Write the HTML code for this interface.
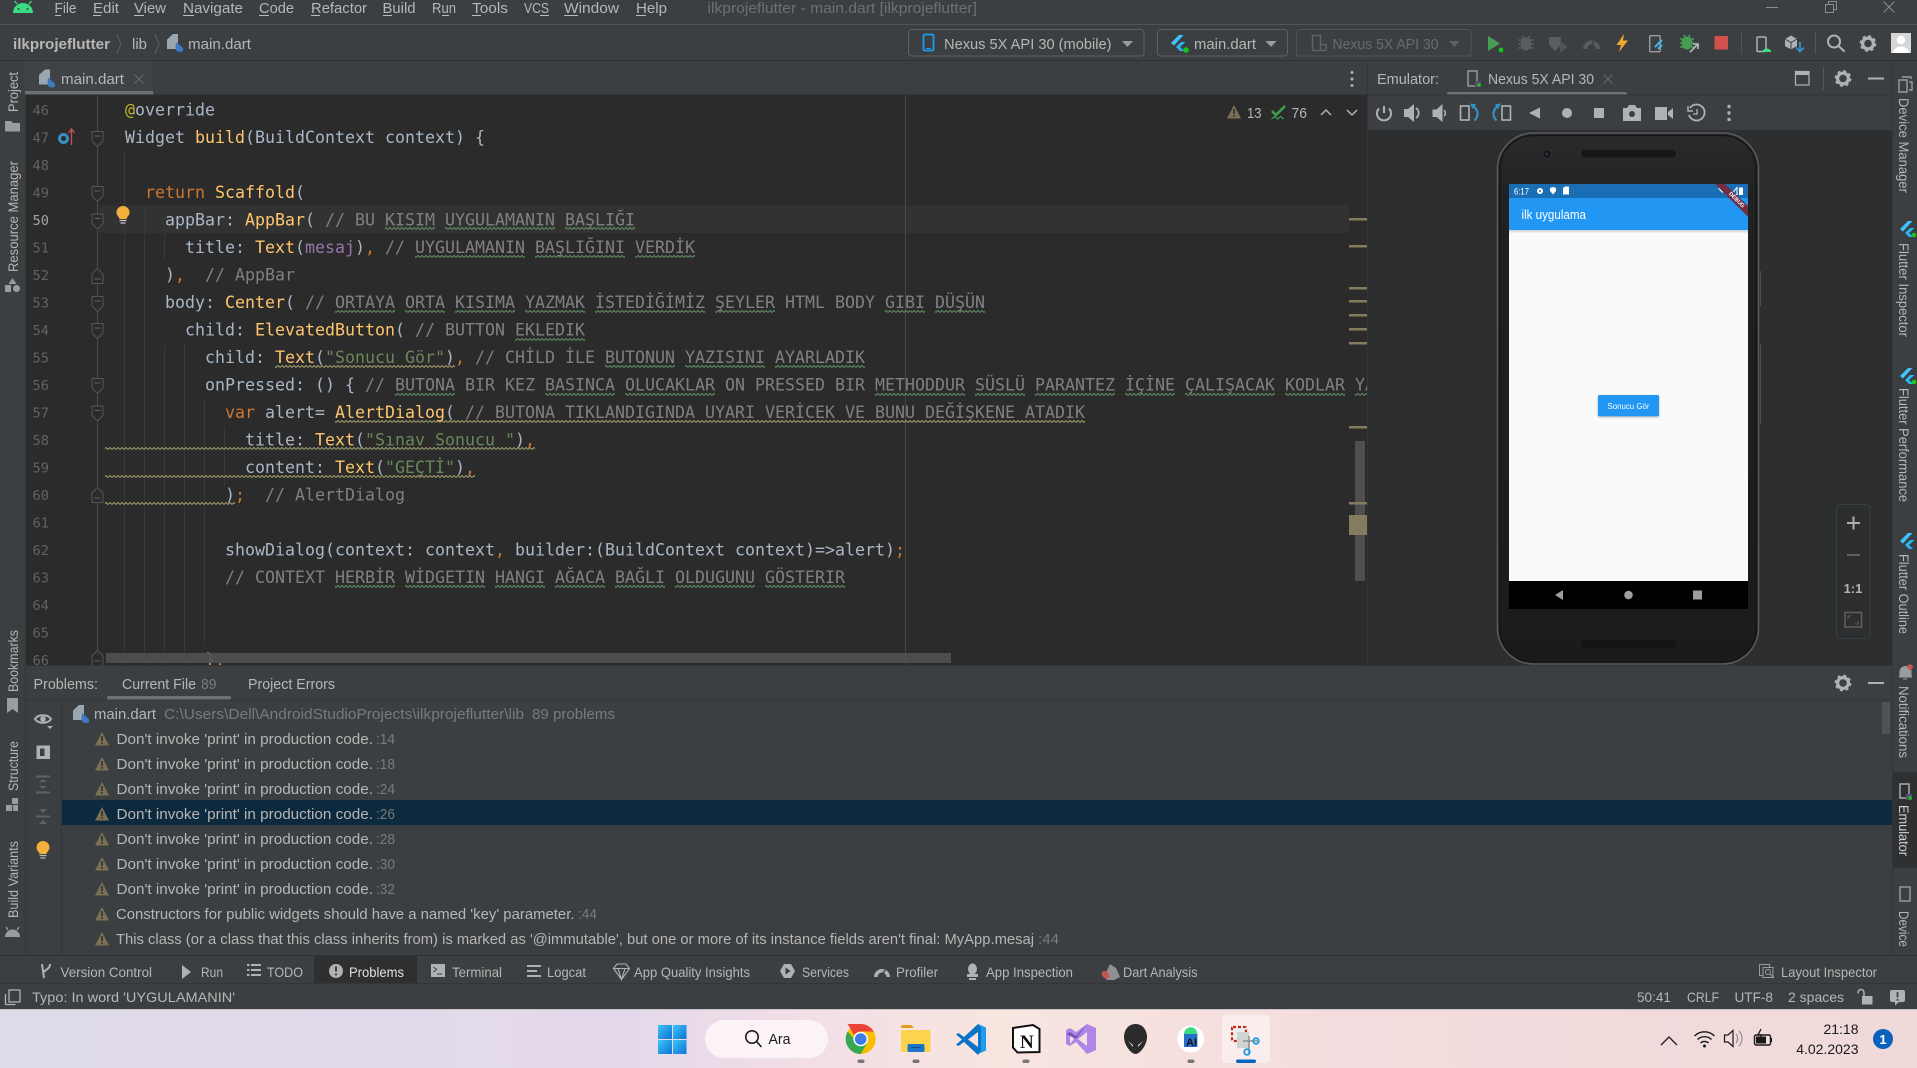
<!DOCTYPE html>
<html lang="en"><head><meta charset="utf-8"><title>ilkprojeflutter - main.dart</title>
<style>
html,body{margin:0;padding:0;background:#3c3f41;width:1917px;height:1068px;overflow:hidden}
svg{display:block}
text{white-space:pre}
.t{font-family:"Liberation Sans",sans-serif;font-size:15px;fill:#b6b6b6}
.s{font-size:14px}
.d{fill:#787a7c}
.v{font-family:"Liberation Sans",sans-serif;font-size:13.5px;fill:#b6b6b6}
.code text{font-family:"DejaVu Sans Mono","Liberation Mono",monospace;font-size:16.61px;fill:#a9b7c6}
.ln{font-family:"DejaVu Sans Mono","Liberation Mono",monospace;font-size:13.7px;fill:#606366}
.k{fill:#cc7832!important}.c{fill:#808080!important}.y{fill:#ffc66d!important}.g{fill:#6a8759!important}.p{fill:#9876aa!important}.a{fill:#bbb529!important}
.w rect{height:3px}
.i{fill:#afb1b3}
.dim{fill:#5f6163}
</style></head><body>
<svg width="1917" height="1068" viewBox="0 0 1917 1068" xmlns="http://www.w3.org/2000/svg">
<defs>
<pattern id="wg" patternUnits="userSpaceOnUse" width="4" height="3"><path d="M0 2.5L2 .5L4 2.5" fill="none" stroke="#5f8f62" stroke-width="1"/></pattern>
<pattern id="wy" patternUnits="userSpaceOnUse" width="4" height="3"><path d="M0 2.5L2 .5L4 2.5" fill="none" stroke="#a39c6b" stroke-width="1"/></pattern>
<linearGradient id="tb" x1="0" x2="1" y1="0" y2="0"><stop offset="0" stop-color="#dfdbe9"/><stop offset=".33" stop-color="#e4d9ea"/><stop offset=".43" stop-color="#f3dfe6"/><stop offset=".52" stop-color="#f8e5e0"/><stop offset=".7" stop-color="#f3dcdd"/><stop offset="1" stop-color="#f0d9d9"/></linearGradient>
<linearGradient id="ph" x1="0" x2="0" y1="0" y2="1"><stop offset="0" stop-color="#2a2b2d"/><stop offset=".12" stop-color="#202123"/><stop offset="1" stop-color="#1b1b1b"/></linearGradient>
<linearGradient id="win" x1="0" x2="1" y1="0" y2="1"><stop offset="0" stop-color="#3fc5f8"/><stop offset="1" stop-color="#0a73d3"/></linearGradient>
<g id="gear"><circle r="5.4" fill="none" stroke="currentColor" stroke-width="3.2"/><circle r="7.3" fill="none" stroke="currentColor" stroke-width="2.2" stroke-dasharray="2.9 2.83"/></g>
<g id="tri"><path d="M7 0L14 13.5H0Z" fill="#7a7054"/><path d="M6.2 4h1.6v5H6.2zM6.2 10h1.6v1.8H6.2z" fill="#2f2f2f"/></g>
<g id="dart"><path d="M6 0h5v15H0V5.5z" fill="#9aa7b0"/><path d="M9 8L16 14Q17 18 13 18Q9 18 8.500 14z" fill="#3d7ac2"/></g>
<g id="fl"><path d="M0 8L8 0H12.500L3 10.500Z" fill="#40c4ff"/><path d="M5 12L10 7H14.500L9 12L13 16H9Z" fill="#29b6f6"/></g>
<g id="fold"><path d="M-5.500 -7.500H5.500V2L0 7.500L-5.500 2Z" fill="#2b2b2b" stroke="#555" stroke-width="1"/><path d="M-3 -3H3" stroke="#606060" stroke-width="1"/></g>
<g id="unf"><path d="M-5.500 7.500H5.500V-2L0 -7.500L-5.500 -2Z" fill="#2b2b2b" stroke="#555" stroke-width="1"/><path d="M-3 3H3" stroke="#606060" stroke-width="1"/></g>
<clipPath id="ed"><rect x="99" y="95" width="1268" height="570"/></clipPath>
<clipPath id="rs"><rect x="1892" y="61" width="25" height="888"/></clipPath>
</defs>

<!-- base -->
<rect width="1917" height="1068" fill="#3c3f41"/>
<rect x="0" y="24" width="1917" height="1" fill="#515557"/>
<rect x="0" y="60" width="1917" height="1" fill="#2f3133"/>

<!-- title bar -->
<g>
<path d="M13 13a10 10 0 0 1 20 0z" fill="#3ddc84"/><path d="M17 4l-2.500-3M29 4l2.500-3" stroke="#3ddc84" stroke-width="1.300"/><circle cx="18.500" cy="9" r="1" fill="#3c3f41"/><circle cx="27.500" cy="9" r="1" fill="#3c3f41"/>
<text class="t" x="54.500" y="13" textLength="22" lengthAdjust="spacingAndGlyphs">File</text>
<text class="t" x="93" y="13" textLength="26" lengthAdjust="spacingAndGlyphs">Edit</text>
<text class="t" x="134" y="13" textLength="32" lengthAdjust="spacingAndGlyphs">View</text>
<text class="t" x="183" y="13" textLength="60" lengthAdjust="spacingAndGlyphs">Navigate</text>
<text class="t" x="259" y="13" textLength="35" lengthAdjust="spacingAndGlyphs">Code</text>
<text class="t" x="311" y="13" textLength="56" lengthAdjust="spacingAndGlyphs">Refactor</text>
<text class="t" x="382.500" y="13" textLength="33" lengthAdjust="spacingAndGlyphs">Build</text>
<text class="t" x="432" y="13" textLength="24" lengthAdjust="spacingAndGlyphs">Run</text>
<text class="t" x="472" y="13" textLength="36" lengthAdjust="spacingAndGlyphs">Tools</text>
<text class="t" x="524" y="13" textLength="25" lengthAdjust="spacingAndGlyphs">VCS</text>
<text class="t" x="564" y="13" textLength="55" lengthAdjust="spacingAndGlyphs">Window</text>
<text class="t" x="636" y="13" textLength="31" lengthAdjust="spacingAndGlyphs">Help</text>
<path d="M55 15.500h6M93 15.500h8M134 15.500h10M183 15.500h11M259 15.500h10M311 15.500h9M383 15.500h9M442 15.500h7M472 15.500h9M540 15.500h9M564 15.500h14M636 15.500h10" stroke="#bbb" stroke-width="1"/>
<text class="t d" x="707.500" y="13" textLength="269.500" lengthAdjust="spacingAndGlyphs" style="fill:#6d7072">ilkprojeflutter - main.dart [ilkprojeflutter]</text>
<path d="M1766 7.500h12" stroke="#8a8c8e"/>
<path d="M1825.500 4.500h8v8h-8zM1828.500 4.500v-3h8v8h-3" fill="none" stroke="#8a8c8e"/>
<path d="M1883.500 1.500l11 11M1894.500 1.500l-11 11" stroke="#8a8c8e"/>
</g>

<!-- breadcrumb -->
<text class="t" x="13" y="49" textLength="97" lengthAdjust="spacingAndGlyphs" font-weight="700">ilkprojeflutter</text>
<path d="M117 34l4 10-4 10M155 34l4 10-4 10" fill="none" stroke="#5e6163"/>
<text class="t" x="132" y="49" textLength="15" lengthAdjust="spacingAndGlyphs">lib</text>
<use href="#dart" x="167" y="34"/>
<text class="t" x="188" y="49" textLength="63" lengthAdjust="spacingAndGlyphs">main.dart</text>

<!-- run config selectors -->
<rect x="908.500" y="29.500" width="235.500" height="26.500" rx="3" fill="#3c3f41" stroke="#5e6163"/>
<rect x="923.500" y="34.500" width="10" height="16" rx="1.500" fill="none" stroke="#1e9df0" stroke-width="1.800"/><path d="M926 48.500h5" stroke="#1e9df0"/>
<text class="t" x="944" y="49" textLength="167.500" lengthAdjust="spacingAndGlyphs">Nexus 5X API 30 (mobile)</text>
<path d="M1122 41h11l-5.500 6z" fill="#9a9da0"/>
<rect x="1157.500" y="29.500" width="130" height="26.500" rx="3" fill="#3c3f41" stroke="#5e6163"/>
<use href="#fl" x="1171" y="35"/><circle cx="1186" cy="50" r="2.800" fill="#14c914"/>
<text class="t" x="1194" y="49" textLength="62" lengthAdjust="spacingAndGlyphs">main.dart</text>
<path d="M1265.500 41h11l-5.500 6z" fill="#9a9da0"/>
<rect x="1296.500" y="29.500" width="174.500" height="26.500" rx="3" fill="#3c3f41" stroke="#505355"/>
<path d="M1312.500 35.500h8v15h-8zM1320 44.500h6v6h-5" fill="none" stroke="#5f6163" stroke-width="1.500"/>
<text class="t" x="1332.500" y="49" textLength="106" lengthAdjust="spacingAndGlyphs" style="fill:#696c6e">Nexus 5X API 30</text>
<path d="M1449 41h10.500l-5.250 6z" fill="#5f6163"/>

<!-- top toolbar icons -->
<path d="M1488 36l12 7.500-12 7.500z" fill="#499c54"/><circle cx="1501" cy="50" r="2.400" fill="#14c914"/>
<g fill="#5a5d5f"><ellipse cx="1526" cy="44" rx="5.500" ry="6.500"/><path d="M1518 40h16M1518 44h16M1518 48h16M1522 36l2 3M1530 36l-2 3" stroke="#5a5d5f" stroke-width="1.600"/></g>
<path d="M1549 37h12v8l-6 6-6-6z" fill="#5a5d5f"/><path d="M1560 41l8 6-8 6z" fill="#505355"/>
<path d="M1583 49a8.500 8.500 0 0 1 17 0h-4a4.500 4.500 0 0 0-9 0z" fill="#5a5d5f"/><path d="M1590 49l4-8" stroke="#3c3f41" stroke-width="1.500"/>
<path d="M1624 34l-7.500 11h4.500l-2 7 9-11.500h-5z" fill="#f0a732"/>
<rect x="1649.700" y="35.700" width="10.500" height="16" rx="1" fill="none" stroke="#9a9da0" stroke-width="1.400"/><path d="M1655 47l7-7M1658 49l4-4" stroke="#3fb7ee" stroke-width="2"/>
<g fill="#499c54"><ellipse cx="1687" cy="43" rx="5.500" ry="6.500"/><path d="M1680 39h14M1680 43h14M1680 47h14M1684 35l1.500 3M1690 35l-1.500 3" stroke="#499c54" stroke-width="1.600"/></g><path d="M1690 52l8-8m-5 0h5v5" fill="none" stroke="#afb1b3" stroke-width="1.800"/>
<rect x="1714.500" y="36" width="13.500" height="13.500" fill="#d2504d"/>
<path d="M1741.500 32v22M1815.500 32v22" stroke="#515557"/>
<rect x="1757" y="37" width="9" height="14.500" rx="1" fill="none" stroke="#afb1b3" stroke-width="1.500"/><path d="M1762 52a5 5 0 0 1 9.500 0z" fill="#3ddc84"/>
<path d="M1785 39l6-3.500 6 3.500v7l-6 3.500-6-3.500z" fill="#afb1b3"/><path d="M1785 39l6 3.500 6-3.500M1791 42.500v7" stroke="#3c3f41" fill="none"/><path d="M1800 42v9m-4-3.500l4 4 4-4" stroke="#3592c4" stroke-width="1.800" fill="none"/>
<circle cx="1834" cy="41.500" r="6" fill="none" stroke="#afb1b3" stroke-width="2"/><path d="M1838.500 46l6 5.500" stroke="#afb1b3" stroke-width="2.200"/>
<use href="#gear" x="1868" y="43.500" color="#afb1b3"/>
<rect x="1891" y="33" width="20" height="20" fill="#d6d6d6"/><circle cx="1901" cy="40" r="4.200" fill="#fff"/><path d="M1893 53a8 6.500 0 0 1 16 0z" fill="#fff"/>

<!-- tab row -->
<rect x="25" y="61" width="128" height="33" fill="#3f4345"/>
<rect x="25" y="91" width="128" height="3.500" fill="#6d7175"/>
<use href="#dart" x="39" y="69.500"/>
<text class="t" x="61" y="84" textLength="63" lengthAdjust="spacingAndGlyphs">main.dart</text>
<path d="M134.500 74.500l9 9M143.500 74.500l-9 9" stroke="#686b6d"/>
<circle cx="1352" cy="72.500" r="1.500" fill="#afb1b3"/><circle cx="1352" cy="79" r="1.500" fill="#afb1b3"/><circle cx="1352" cy="85.500" r="1.500" fill="#afb1b3"/>

<!-- editor -->
<rect x="25" y="94.500" width="1343" height="570.500" fill="#2b2b2b"/>
<rect x="99" y="205.500" width="1250" height="27.500" fill="#323232"/>
<path d="M97.500 96V660" stroke="#4a4a4a"/>
<g stroke="#383838"><path d="M124.500 150V665M144.500 205V665M164.500 233V260M164.500 345V665M184.500 343V665M204.500 400V645M224.500 427V487"/></g>
<path d="M905.500 95V665" stroke="#474747"/>

<g class="ln">
<text x="32.500" y="115">46</text><text x="32.500" y="142.500">47</text><text x="32.500" y="170">48</text><text x="32.500" y="197.500">49</text><text x="32.500" y="225" style="fill:#a4a3a3">50</text><text x="32.500" y="252.500">51</text><text x="32.500" y="280">52</text><text x="32.500" y="307.500">53</text><text x="32.500" y="335">54</text><text x="32.500" y="362.500">55</text><text x="32.500" y="390">56</text><text x="32.500" y="417.500">57</text><text x="32.500" y="445">58</text><text x="32.500" y="472.500">59</text><text x="32.500" y="500">60</text><text x="32.500" y="527.500">61</text><text x="32.500" y="555">62</text><text x="32.500" y="582.500">63</text><text x="32.500" y="610">64</text><text x="32.500" y="637.500">65</text><text x="32.500" y="665">66</text>
</g>
<use href="#fold" x="97.500" y="139"/><use href="#fold" x="97.500" y="194"/><use href="#fold" x="97.500" y="221.500"/><use href="#unf" x="97.500" y="276"/><use href="#fold" x="97.500" y="304"/><use href="#fold" x="97.500" y="331"/><use href="#fold" x="97.500" y="386"/><use href="#fold" x="97.500" y="413.500"/><use href="#unf" x="97.500" y="495"/><use href="#unf" x="97.500" y="658"/>
<circle cx="63.500" cy="138.500" r="4" fill="none" stroke="#3592c4" stroke-width="3"/><path d="M71.500 145V130m-3 3l3-4 3 4" stroke="#c75450" fill="none" stroke-width="1.300"/>
<path d="M123 206a6.500 6.500 0 0 1 6.500 6.500c0 3-2.500 4-3 6.500h-7c-.5-2.500-3-3.500-3-6.500a6.500 6.500 0 0 1 6.500-6.500z" fill="#f4af3d" transform="translate(0,0)"/><path d="M119.500 220.500h7M120.500 223h5" stroke="#c9c9c9" stroke-width="1.300"/>

<!-- wavy underlines -->
<g clip-path="url(#ed)">
<g class="w" fill="url(#wg)" transform="translate(0,227)"><rect x="385" width="50"/><rect x="445" width="110"/><rect x="565" width="70"/></g>
<g class="w" fill="url(#wg)" transform="translate(0,255)"><rect x="415" width="110"/><rect x="535" width="90"/><rect x="635" width="60"/></g>
<g class="w" fill="url(#wg)" transform="translate(0,310)"><rect x="335" width="60"/><rect x="405" width="40"/><rect x="455" width="60"/><rect x="525" width="60"/><rect x="595" width="110"/><rect x="715" width="60"/><rect x="885" width="40"/><rect x="935" width="50"/></g>
<g class="w" fill="url(#wg)" transform="translate(0,338)"><rect x="515" width="70"/></g>
<g class="w" fill="url(#wy)" transform="translate(0,365)"><rect x="275" width="180"/></g>
<g class="w" fill="url(#wg)" transform="translate(0,365)"><rect x="605" width="70"/><rect x="685" width="80"/><rect x="775" width="90"/></g>
<g class="w" fill="url(#wg)" transform="translate(0,393)"><rect x="395" width="60"/><rect x="545" width="70"/><rect x="625" width="90"/><rect x="875" width="90"/><rect x="975" width="50"/><rect x="1035" width="80"/><rect x="1125" width="50"/><rect x="1185" width="90"/><rect x="1285" width="60"/><rect x="1355" width="12"/></g>
<g class="w" fill="url(#wy)" transform="translate(0,420)"><rect x="335" width="750"/></g>
</g>
<g class="w" fill="url(#wy)" transform="translate(0,447)"><rect x="105" width="430"/></g>
<g class="w" fill="url(#wy)" transform="translate(0,475)"><rect x="105" width="370"/></g>
<g class="w" fill="url(#wy)" transform="translate(0,502)"><rect x="105" width="130"/></g>
<g class="w" fill="url(#wg)" transform="translate(0,585)"><rect x="335" width="60"/><rect x="405" width="80"/><rect x="495" width="50"/><rect x="555" width="50"/><rect x="615" width="50"/><rect x="675" width="80"/><rect x="765" width="80"/></g>

<!-- code -->
<g class="code" clip-path="url(#ed)">
<text x="125" y="115.500"><tspan class="a">@</tspan>override</text>
<text x="125" y="143">Widget <tspan class="y">build</tspan>(BuildContext context) {</text>
<text x="125" y="198">  <tspan class="k">return</tspan> <tspan class="y">Scaffold</tspan>(</text>
<text x="125" y="225.500">    appBar: <tspan class="y">AppBar</tspan>( <tspan class="c">// BU KISIM UYGULAMANIN BAŞLIĞI</tspan></text>
<text x="125" y="253">      title: <tspan class="y">Text</tspan>(<tspan class="p">mesaj</tspan>)<tspan class="k">,</tspan> <tspan class="c">// UYGULAMANIN BAŞLIĞINI VERDİK</tspan></text>
<text x="125" y="280.500">    )<tspan class="k">,</tspan>  <tspan class="c">// AppBar</tspan></text>
<text x="125" y="308">    body: <tspan class="y">Center</tspan>( <tspan class="c">// ORTAYA ORTA KISIMA YAZMAK İSTEDİĞİMİZ ŞEYLER HTML BODY GIBI DÜŞÜN</tspan></text>
<text x="125" y="335.500">      child: <tspan class="y">ElevatedButton</tspan>( <tspan class="c">// BUTTON EKLEDIK</tspan></text>
<text x="125" y="363">        child: <tspan class="y">Text</tspan>(<tspan class="g">"Sonucu Gör"</tspan>)<tspan class="k">,</tspan> <tspan class="c">// CHİLD İLE BUTONUN YAZISINI AYARLADIK</tspan></text>
<text x="125" y="390.500">        onPressed: () { <tspan class="c">// BUTONA BIR KEZ BASINCA OLUCAKLAR ON PRESSED BIR METHODDUR SÜSLÜ PARANTEZ İÇİNE ÇALIŞACAK KODLAR YAZILIR</tspan></text>
<text x="125" y="418">          <tspan class="k">var</tspan> alert= <tspan class="y">AlertDialog</tspan>( <tspan class="c">// BUTONA TIKLANDIGINDA UYARI VERİCEK VE BUNU DEĞİŞKENE ATADIK</tspan></text>
<text x="125" y="445.500">            title: <tspan class="y">Text</tspan>(<tspan class="g">"Sınav Sonucu "</tspan>)<tspan class="k">,</tspan></text>
<text x="125" y="473">            content: <tspan class="y">Text</tspan>(<tspan class="g">"GEÇTİ"</tspan>)<tspan class="k">,</tspan></text>
<text x="125" y="500.500">          )<tspan class="k">;</tspan>  <tspan class="c">// AlertDialog</tspan></text>
<text x="125" y="555.500">          showDialog(context: context<tspan class="k">,</tspan> builder:(BuildContext context)=&gt;alert)<tspan class="k">;</tspan></text>
<text x="125" y="583">          <tspan class="c">// CONTEXT HERBİR WİDGETIN HANGI AĞACA BAĞLI OLDUGUNU GÖSTERIR</tspan></text>
<text x="125" y="665.500">        }<tspan class="k">,</tspan></text>
</g>
<rect x="106" y="653" width="845" height="10" fill="#505050" fill-opacity=".92"/>

<!-- inspection widget -->
<use href="#tri" x="1227" y="105"/>
<text class="t" x="1247" y="118" textLength="14.500" lengthAdjust="spacingAndGlyphs">13</text>
<path d="M1272 111l4 4 9-9" fill="none" stroke="#3f9d4f" stroke-width="2.600"/><path d="M1271.500 119l3-2.500 3 2.500 3-2.500 3 2.500" fill="none" stroke="#3f9d4f" stroke-width="1.200"/>
<text class="t" x="1291.500" y="118" textLength="15.500" lengthAdjust="spacingAndGlyphs">76</text>
<path d="M1321 115l5-5 5 5M1347 110l5 5 5-5" fill="none" stroke="#afb1b3" stroke-width="1.500"/>

<!-- error stripe -->
<rect x="1355" y="441" width="10" height="140" fill="#4f4f4f"/>
<g fill="#857b5e"><rect x="1349" y="218" width="18" height="2.500"/><rect x="1349" y="245" width="18" height="2.500"/><rect x="1349" y="287" width="18" height="2.500"/><rect x="1349" y="300" width="18" height="2.500"/><rect x="1349" y="314" width="18" height="2.500"/><rect x="1349" y="328" width="18" height="2.500"/><rect x="1349" y="342" width="18" height="2.500"/><rect x="1349" y="426" width="18" height="2.500"/><rect x="1349" y="502" width="18" height="2.500"/><rect x="1349" y="515" width="18" height="20"/></g>

<!-- emulator panel -->
<rect x="1367" y="61" width="1" height="604" fill="#323436"/>
<text class="t" x="1377" y="84" textLength="62" lengthAdjust="spacingAndGlyphs">Emulator:</text>
<rect x="1468" y="71" width="9" height="15" fill="none" stroke="#9a9da0" stroke-width="1.400"/><rect x="1475" y="81" width="6" height="6" fill="#5c4a78"/><circle cx="1479" cy="85" r="1.800" fill="#14c914"/>
<text class="t" x="1488" y="84" textLength="106" lengthAdjust="spacingAndGlyphs">Nexus 5X API 30</text>
<path d="M1603.500 74.500l9 9M1612.500 74.500l-9 9" stroke="#686b6d"/>
<rect x="1447" y="92" width="180" height="3" rx="1.500" fill="#6d7175"/>
<rect x="1795.500" y="71.500" width="13.500" height="13.500" fill="none" stroke="#afb1b3" stroke-width="1.200"/><rect x="1795.500" y="71.500" width="13.500" height="3.500" fill="#afb1b3"/>
<path d="M1823.500 67v23" stroke="#515557"/>
<use href="#gear" x="1843" y="78.500" color="#afb1b3"/>
<rect x="1868" y="77.500" width="16" height="2" fill="#afb1b3"/>
<rect x="1368" y="94.500" width="524" height="1" fill="#323436"/>

<!-- emulator toolbar icons -->
<g>
<path d="M1384 106v7" stroke="#afb1b3" stroke-width="2"/><path d="M1379 108.500a7 7 0 1 0 10 0" fill="none" stroke="#afb1b3" stroke-width="2"/>
<path d="M1404 109h4l6-5v18l-6-5h-4z" class="i"/><path d="M1416 108a6 6 0 0 1 0 10" fill="none" stroke="#afb1b3" stroke-width="1.800"/>
<path d="M1432.500 109.500h4l6-5.500v18l-6-5h-4z" class="i"/><path d="M1444 110a4 4 0 0 1 0 6" fill="none" stroke="#afb1b3" stroke-width="1.500"/>
<rect x="1460.500" y="106" width="8.500" height="14" fill="none" stroke="#afb1b3" stroke-width="1.600"/><path d="M1472 105.500c6 3 7.500 10 2.500 15" fill="none" stroke="#3592c4" stroke-width="2.200"/><path d="M1470 103.500l6 .8-3 5z" fill="#3592c4"/>
<rect x="1502" y="106" width="8.500" height="14" fill="none" stroke="#afb1b3" stroke-width="1.600"/><path d="M1499 105.500c-6 3-7.500 10-2.500 15" fill="none" stroke="#3592c4" stroke-width="2.200"/><path d="M1501 103.500l-6 .8 3 5z" fill="#3592c4"/>
<path d="M1540 107.500v11l-11-5.500z" class="i"/>
<circle cx="1567" cy="113" r="5" class="i"/>
<rect x="1594" y="108" width="10" height="10" class="i"/>
<path d="M1623 108h4l2-3h6l2 3h4v13h-18z" class="i"/><circle cx="1632" cy="114" r="3" fill="#3c3f41"/>
<path d="M1655 107h12v13h-12zM1668 112l5-4v11l-5-4z" class="i"/>
<path d="M1690 108a8 8 0 1 1-1 7" fill="none" stroke="#afb1b3" stroke-width="1.800"/><path d="M1688 106v5h5" fill="none" stroke="#afb1b3" stroke-width="1.500"/><path d="M1697 109v5h-4" fill="none" stroke="#afb1b3" stroke-width="1.300"/>
<circle cx="1729" cy="106.500" r="1.700" class="i"/><circle cx="1729" cy="113" r="1.700" class="i"/><circle cx="1729" cy="119.500" r="1.700" class="i"/>
</g>

<!-- emulator canvas -->
<rect x="1368" y="130" width="524" height="535" fill="#2c2e30"/>
<rect x="1497.500" y="133" width="261" height="531" rx="36" fill="url(#ph)" stroke="#5a5b5c" stroke-width="1.500"/>
<rect x="1500" y="135.500" width="256" height="526" rx="33" fill="none" stroke="#161616" stroke-width="1.500"/>
<path d="M1760.500 271V306M1760.500 344V424" stroke="#4d4e50" stroke-width="1"/>
<rect x="1581" y="150" width="95" height="7.500" rx="3.700" fill="#161616"/>
<circle cx="1547" cy="154" r="4.500" fill="#18191a" stroke="#303133"/><circle cx="1547" cy="154" r="1.200" fill="#3a3344"/>
<rect x="1581" y="640" width="95" height="8" rx="4" fill="#141414"/>
<rect x="1509" y="184" width="239" height="397" fill="#fafafa"/>
<rect x="1509" y="184" width="239" height="14" fill="#1a6fb4"/>
<rect x="1509" y="198" width="239" height="32" fill="#2196f3"/>
<rect x="1509" y="230" width="239" height="1.500" fill="#cfd6dc"/>
<rect x="1509" y="231.500" width="239" height="1.500" fill="#eceded"/>
<text x="1514" y="194.500" font-family="Liberation Sans,sans-serif" font-size="9.500" fill="#fff" textLength="15" lengthAdjust="spacingAndGlyphs">6:17</text>
<circle cx="1540" cy="191" r="3" fill="#fff"/><circle cx="1540" cy="191" r="1" fill="#1a6fb4"/>
<path d="M1550 188l3-1 3 1v3l-3 3.500-3-3.500z" fill="#fff"/><path d="M1563 188l2-1.500h4v8h-6z" fill="#fff"/>
<path d="M1718 188h8.500l-4.250 5z" fill="#fff"/><path d="M1731 194.500l6-7v7z" fill="none" stroke="#fff" stroke-width="1"/><rect x="1739" y="187.500" width="4" height="7.500" rx=".5" fill="#fff"/>
<text x="1521.500" y="219" font-family="Liberation Sans,sans-serif" font-size="12.500" fill="#fff" textLength="64.500" lengthAdjust="spacingAndGlyphs">ilk uygulama</text>
<path d="M1715 184h10l23 22v10.700z" fill="#6e2e44"/>
<text transform="translate(1728.500,194) rotate(45)" font-family="Liberation Sans,sans-serif" font-size="5.500" font-weight="700" fill="#fff">DEBUG</text>
<rect x="1598" y="395" width="61" height="21.300" rx="1.500" fill="#2196f3" style="filter:drop-shadow(0 1px 1px rgba(0,0,0,.3))"/>
<text x="1628.500" y="409" text-anchor="middle" font-family="Liberation Sans,sans-serif" font-size="8.500" fill="#fff" textLength="42" lengthAdjust="spacingAndGlyphs">Sonucu Gör</text>
<rect x="1509" y="581" width="239" height="28" fill="#000"/>
<path d="M1563 590v10l-8-5z" fill="#9e9e9e"/><circle cx="1628.500" cy="595" r="4.300" fill="#9e9e9e"/><rect x="1693" y="590.500" width="9" height="9" fill="#9e9e9e"/>
<!-- zoom controls -->
<rect x="1836.500" y="504.500" width="33.500" height="134" rx="4" fill="#2c2e30" stroke="#3c3f41"/>
<path d="M1847 523h13M1853.500 516.500v13" stroke="#afb1b3" stroke-width="2"/>
<path d="M1847 555h13" stroke="#5f6163" stroke-width="2"/>
<text x="1853" y="593" text-anchor="middle" font-family="Liberation Sans,sans-serif" font-size="13" font-weight="700" fill="#afb1b3">1:1</text>
<rect x="1845" y="612.500" width="16.500" height="14.500" fill="none" stroke="#5f6163" stroke-width="1.500"/><path d="M1848 619v-3h3M1858 621v3h-3" fill="none" stroke="#5f6163"/>

<!-- left strip -->
<rect x="0" y="61" width="25" height="894" fill="#3c3f41"/>
<rect x="25" y="94.500" width="1" height="860" fill="#333537"/>
<text class="v" transform="translate(18,112) rotate(-90)" textLength="40" lengthAdjust="spacingAndGlyphs">Project</text>
<path d="M5 121h6l2 2h7v8.500H5z" fill="#9a9da0"/>
<text class="v" transform="translate(18,272) rotate(-90)" textLength="111" lengthAdjust="spacingAndGlyphs">Resource Manager</text>
<path d="M12.500 278l4 6h-8z" fill="#9a9da0"/><rect x="5" y="285" width="6" height="7" fill="#9a9da0"/><circle cx="16.500" cy="288.500" r="3.500" fill="#9a9da0"/>
<text class="v" transform="translate(18,692) rotate(-90)" textLength="62" lengthAdjust="spacingAndGlyphs">Bookmarks</text>
<path d="M7 698h11v15l-5.500-4-5.500 4z" fill="#9a9da0"/>
<text class="v" transform="translate(18,791) rotate(-90)" textLength="50" lengthAdjust="spacingAndGlyphs">Structure</text>
<path d="M12 798h6v6h-6zM6 805h6v6H6zM13 805h5v6h-5z" fill="#9a9da0"/>
<text class="v" transform="translate(18,918) rotate(-90)" textLength="77" lengthAdjust="spacingAndGlyphs">Build Variants</text>
<path d="M5 937a7.500 7.500 0 0 1 15 0z" fill="#9a9da0"/><path d="M8 930l-2-3M17 930l2-3" stroke="#9a9da0" stroke-width="1.300"/>

<!-- right strip -->
<rect x="1892" y="61" width="25" height="894" fill="#3c3f41"/>
<rect x="1892" y="61" width="1" height="894" fill="#323436"/>
<rect x="1893" y="772" width="24" height="96" fill="#2e3032"/>
<g clip-path="url(#rs)">
<path d="M1902 77h9v2M1899 80h8v12h-8zM1909 82h3v8h-3" fill="none" stroke="#9a9da0" stroke-width="1.400"/>
<text class="v" transform="translate(1899,98) rotate(90)" textLength="95" lengthAdjust="spacingAndGlyphs">Device Manager</text>
<g transform="translate(1900,221)"><use href="#fl"/><circle cx="14" cy="14" r="2.300" fill="#14c914"/></g>
<text class="v" transform="translate(1899,243) rotate(90)" textLength="94" lengthAdjust="spacingAndGlyphs">Flutter Inspector</text>
<g transform="translate(1900,368)"><use href="#fl"/><circle cx="14" cy="14" r="2.300" fill="#14c914"/></g>
<text class="v" transform="translate(1899,388) rotate(90)" textLength="114" lengthAdjust="spacingAndGlyphs">Flutter Performance</text>
<g transform="translate(1900,533)"><use href="#fl"/></g>
<text class="v" transform="translate(1899,554) rotate(90)" textLength="80" lengthAdjust="spacingAndGlyphs">Flutter Outline</text>
<path d="M1899 677c1 0 1-2 1-5a5 5 0 0 1 11 0c0 3 0 5 1 5zM1903 679h4" fill="#9a9da0" stroke="#9a9da0"/><circle cx="1910" cy="667" r="2.800" fill="#c75450"/>
<text class="v" transform="translate(1899,686) rotate(90)" textLength="72" lengthAdjust="spacingAndGlyphs">Notifications</text>
<rect x="1900" y="784" width="9" height="14" fill="none" stroke="#afb1b3" stroke-width="1.400"/><rect x="1906" y="794" width="6" height="6" fill="#5c4a78"/><circle cx="1910" cy="798" r="1.800" fill="#14c914"/>
<text class="v" transform="translate(1899,805) rotate(90)" textLength="51" lengthAdjust="spacingAndGlyphs" style="fill:#d0d0d0">Emulator</text>
<rect x="1900" y="887" width="10" height="14" fill="none" stroke="#9a9da0" stroke-width="1.400"/>
<text class="v" transform="translate(1899,911) rotate(90)" textLength="105" lengthAdjust="spacingAndGlyphs">Device File Explorer</text>
</g>

<!-- problems panel -->
<rect x="26" y="665" width="1866" height="34" fill="#3c3f41"/>
<rect x="26" y="665" width="1866" height="1" fill="#333537"/>
<text class="t" x="33.500" y="689" textLength="64.500" lengthAdjust="spacingAndGlyphs">Problems:</text>
<text class="t" x="122" y="689" textLength="74" lengthAdjust="spacingAndGlyphs">Current File</text>
<text class="t d" x="201" y="689" textLength="15.500" lengthAdjust="spacingAndGlyphs">89</text>
<text class="t" x="248" y="689" textLength="87" lengthAdjust="spacingAndGlyphs">Project Errors</text>
<rect x="107" y="696" width="124" height="3.500" rx="1.500" fill="#6d7175"/>
<rect x="26" y="699.500" width="1866" height="1" fill="#333537"/>
<use href="#gear" x="1843" y="683" color="#afb1b3"/>
<rect x="1868" y="682" width="16" height="2" fill="#afb1b3"/>
<rect x="61" y="700" width="1" height="255" fill="#333537"/>
<!-- problems side icons -->
<path d="M35 719c3-5 13-5 16 0-3 5-13 5-16 0z" fill="none" stroke="#afb1b3" stroke-width="2"/><circle cx="43" cy="719" r="2.800" fill="#afb1b3"/><path d="M47 726h6l-3 3z" fill="#afb1b3"/>
<rect x="36.500" y="745.500" width="13.500" height="13.500" fill="#afb1b3"/><rect x="40" y="748.500" width="4.500" height="7.500" fill="#3c3f41"/>
<path d="M36 776.500h14M36 792.500h14" stroke="#5f6163" stroke-width="2"/><path d="M39 782l4-3 4 3zM39 786l4 3 4-3z" fill="#5f6163"/>
<path d="M36 816.500h14" stroke="#5f6163" stroke-width="2"/><path d="M39 809l4 4 4-4zM39 824l4-4 4 4z" fill="#5f6163"/>
<path d="M43 841a6.500 6.500 0 0 1 6.500 6.500c0 3-2.500 4-3 6.500h-7c-.5-2.500-3-3.500-3-6.500a6.500 6.500 0 0 1 6.500-6.500z" fill="#f4af3d"/><path d="M39.500 855.500h7M40.500 858h5" stroke="#b8b8b8" stroke-width="1.300"/>
<!-- problems list -->
<rect x="62" y="800" width="1830" height="25" fill="#0d293e"/>
<rect x="1882" y="702" width="8" height="32" fill="#505355"/>
<use href="#dart" x="73" y="705"/>
<text class="t" x="94" y="719" textLength="62" lengthAdjust="spacingAndGlyphs">main.dart</text>
<text class="t d" x="164" y="719" textLength="360" lengthAdjust="spacingAndGlyphs">C:\Users\Dell\AndroidStudioProjects\ilkprojeflutter\lib</text>
<text class="t d" x="532" y="719" textLength="83" lengthAdjust="spacingAndGlyphs">89 problems</text>
<use href="#tri" x="95" y="732"/><text class="t" x="116.500" y="744" textLength="256.500" lengthAdjust="spacingAndGlyphs">Don't invoke 'print' in production code.</text><text class="t d" x="376" y="744" textLength="19" lengthAdjust="spacingAndGlyphs">:14</text>
<use href="#tri" x="95" y="757"/><text class="t" x="116.500" y="769" textLength="256.500" lengthAdjust="spacingAndGlyphs">Don't invoke 'print' in production code.</text><text class="t d" x="376" y="769" textLength="19" lengthAdjust="spacingAndGlyphs">:18</text>
<use href="#tri" x="95" y="782"/><text class="t" x="116.500" y="794" textLength="256.500" lengthAdjust="spacingAndGlyphs">Don't invoke 'print' in production code.</text><text class="t d" x="376" y="794" textLength="19" lengthAdjust="spacingAndGlyphs">:24</text>
<use href="#tri" x="95" y="807"/><text class="t" x="116.500" y="819" textLength="256.500" lengthAdjust="spacingAndGlyphs">Don't invoke 'print' in production code.</text><text class="t d" x="376" y="819" textLength="19" lengthAdjust="spacingAndGlyphs">:26</text>
<use href="#tri" x="95" y="832"/><text class="t" x="116.500" y="844" textLength="256.500" lengthAdjust="spacingAndGlyphs">Don't invoke 'print' in production code.</text><text class="t d" x="376" y="844" textLength="19" lengthAdjust="spacingAndGlyphs">:28</text>
<use href="#tri" x="95" y="857"/><text class="t" x="116.500" y="869" textLength="256.500" lengthAdjust="spacingAndGlyphs">Don't invoke 'print' in production code.</text><text class="t d" x="376" y="869" textLength="19" lengthAdjust="spacingAndGlyphs">:30</text>
<use href="#tri" x="95" y="882"/><text class="t" x="116.500" y="894" textLength="256.500" lengthAdjust="spacingAndGlyphs">Don't invoke 'print' in production code.</text><text class="t d" x="376" y="894" textLength="19" lengthAdjust="spacingAndGlyphs">:32</text>
<use href="#tri" x="95" y="907"/><text class="t" x="116" y="919" textLength="458.500" lengthAdjust="spacingAndGlyphs">Constructors for public widgets should have a named 'key' parameter.</text><text class="t d" x="578" y="919" textLength="19" lengthAdjust="spacingAndGlyphs">:44</text>
<use href="#tri" x="95" y="932"/><text class="t" x="116" y="944" textLength="918" lengthAdjust="spacingAndGlyphs">This class (or a class that this class inherits from) is marked as '@immutable', but one or more of its instance fields aren't final: MyApp.mesaj</text><text class="t d" x="1038" y="944" textLength="21" lengthAdjust="spacingAndGlyphs">:44</text>

<!-- tool window bar -->
<rect x="0" y="955" width="1917" height="1" fill="#2f3133"/>
<rect x="314" y="956" width="103" height="27" fill="#2d2f30"/>
<rect x="0" y="983" width="1917" height="1" fill="#333537"/>
<path d="M42 964l2 14M50 964c0 5-4 5-6 8" fill="none" stroke="#afb1b3" stroke-width="2"/>
<text class="t s" x="60.500" y="977" textLength="91.500" lengthAdjust="spacingAndGlyphs">Version Control</text>
<path d="M182 965l9 7-9 7z" class="i"/>
<text class="t s" x="201" y="977" textLength="22" lengthAdjust="spacingAndGlyphs">Run</text>
<path d="M247 965h2.500M251 965h10M247 970h2.500M251 970h10M247 975h2.500M251 975h10" stroke="#afb1b3" stroke-width="2"/>
<text class="t s" x="267" y="977" textLength="36" lengthAdjust="spacingAndGlyphs">TODO</text>
<circle cx="336" cy="971" r="7" fill="#afb1b3"/><path d="M336 966.500v5M336 973.500v2" stroke="#2d2f30" stroke-width="1.800"/>
<text class="t s" x="349" y="977" textLength="55" lengthAdjust="spacingAndGlyphs" style="fill:#e0e0e0">Problems</text>
<rect x="431" y="964" width="14" height="13" fill="#afb1b3"/><path d="M433.500 967l3 2.500-3 2.500M437 974h5" fill="none" stroke="#3c3f41"/>
<text class="t s" x="452" y="977" textLength="50" lengthAdjust="spacingAndGlyphs">Terminal</text>
<path d="M527 966h14M527 971h10M527 976h14" stroke="#afb1b3" stroke-width="2"/>
<text class="t s" x="547" y="977" textLength="39" lengthAdjust="spacingAndGlyphs">Logcat</text>
<path d="M617 964h9l3.500 4.500-8 11-8-11zM614 968.500h15M618 968.500l3.500 11 3.500-11" fill="none" stroke="#afb1b3" stroke-width="1.100"/>
<text class="t s" x="634" y="977" textLength="116" lengthAdjust="spacingAndGlyphs">App Quality Insights</text>
<path d="M784 964h7l4 7-4 7h-7l-4-7z" class="i"/><path d="M785.500 967.500l5 3.500-5 3.500z" fill="#3c3f41"/>
<text class="t s" x="802" y="977" textLength="47" lengthAdjust="spacingAndGlyphs">Services</text>
<path d="M874 977a8 8 0 0 1 16 0h-3.500a4.500 4.500 0 0 0-9 0z" class="i"/><path d="M881 977l4-7" stroke="#3c3f41" stroke-width="1.300"/>
<text class="t s" x="896" y="977" textLength="42" lengthAdjust="spacingAndGlyphs">Profiler</text>
<ellipse cx="972.500" cy="969" rx="4.500" ry="5.500" class="i"/><path d="M967 974h11v3h-11zM969 978h7v2h-7z" class="i"/>
<text class="t s" x="986" y="977" textLength="87" lengthAdjust="spacingAndGlyphs">App Inspection</text>
<path d="M1104 977l6-13 6 4 4 9-6 3h-7z" fill="#8f9193"/><path d="M1103 971a4.500 4.500 0 1 0 7 6l-3-6z" fill="#c75450"/>
<text class="t s" x="1123" y="977" textLength="74.500" lengthAdjust="spacingAndGlyphs">Dart Analysis</text>
<path d="M1759.500 964.500h10v3M1759.500 964.500v11h4" fill="none" stroke="#9a9da0"/><rect x="1763" y="967.500" width="10" height="10" fill="none" stroke="#9a9da0"/><circle cx="1768" cy="972" r="2.500" fill="none" stroke="#9a9da0"/><path d="M1770 974l4 4" stroke="#9a9da0"/>
<text class="t s" x="1781" y="977" textLength="96" lengthAdjust="spacingAndGlyphs">Layout Inspector</text>

<!-- status bar -->
<rect x="9" y="990" width="11" height="12" fill="none" stroke="#afb1b3" stroke-width="1.300"/><path d="M5.500 994v10.500h10" fill="none" stroke="#afb1b3" stroke-width="1.300"/>
<text class="t s" x="32" y="1002" textLength="203" lengthAdjust="spacingAndGlyphs">Typo: In word 'UYGULAMANIN'</text>
<text class="t s" x="1637" y="1002" textLength="34" lengthAdjust="spacingAndGlyphs">50:41</text>
<text class="t s" x="1687" y="1002" textLength="32" lengthAdjust="spacingAndGlyphs">CRLF</text>
<text class="t s" x="1734.500" y="1002" textLength="38.500" lengthAdjust="spacingAndGlyphs">UTF-8</text>
<text class="t s" x="1788" y="1002" textLength="56" lengthAdjust="spacingAndGlyphs">2 spaces</text>
<rect x="1862" y="996" width="10.500" height="8.500" fill="#afb1b3"/><path d="M1864 996v-3.500a3 3 0 0 0-6 0v1" fill="none" stroke="#afb1b3" stroke-width="1.500"/>
<rect x="1890" y="990" width="15" height="12" rx="2" fill="#afb1b3"/><path d="M1895 1002v3.500l4-3.500z" fill="#afb1b3"/><path d="M1897.500 992v5.500M1897.500 999v1.800" stroke="#3c3f41" stroke-width="1.700"/>

<!-- taskbar -->
<rect x="0" y="1009" width="1917" height="1" fill="#c8c5c9"/>
<rect x="0" y="1010" width="1917" height="58" fill="url(#tb)"/>
<g fill="url(#win)"><rect x="658" y="1025" width="14" height="14"/><rect x="673" y="1025" width="13.500" height="14"/><rect x="658" y="1040" width="14" height="14"/><rect x="673" y="1040" width="13.500" height="14"/></g>
<rect x="705" y="1020" width="123" height="38" rx="19" fill="#fbf3f5"/>
<circle cx="752" cy="1037" r="6.200" fill="none" stroke="#1a1a1a" stroke-width="1.600"/><path d="M756.500 1041.500l5 5.500" stroke="#1a1a1a" stroke-width="1.600"/>
<text x="768.500" y="1044" font-family="Liberation Sans,sans-serif" font-size="15" fill="#1a1a1a" textLength="22" lengthAdjust="spacingAndGlyphs">Ara</text>
<!-- chrome -->
<circle cx="860.700" cy="1039" r="15" fill="#fbbc04"/>
<path d="M860.700 1024a15 15 0 0 1 13 7.500h-13a7.500 7.500 0 0 0-6.500 3.750l-6.500-11.250z" fill="#ea4335"/>
<path d="M847.700 1031.500a15 15 0 0 0 13 22.500l6.500-11.250a7.500 7.500 0 0 1-13-3.750z" fill="#34a853"/>
<circle cx="860.700" cy="1039" r="7.300" fill="#fff"/><circle cx="860.700" cy="1039" r="5.800" fill="#3a7bea"/>
<rect x="857.500" y="1059.500" width="7" height="3.500" rx="1.700" fill="#777"/>
<!-- folder -->
<path d="M901 1027a2 2 0 0 1 2-2h8l3 3h-13z" fill="#e0a012"/><path d="M901 1030h28a1.500 1.500 0 0 1 1.500 1.500V1052h-29.500z" fill="#fcd34d"/><rect x="907.500" y="1044" width="17" height="8" rx="1.500" fill="#1a76c9"/><path d="M911 1047.500h10" stroke="#0c4f8f"/>
<rect x="912.500" y="1059.500" width="7" height="3.500" rx="1.700" fill="#777"/>
<!-- vscode -->
<path d="M978 1024l8 3.500v23l-8 3.500z" fill="#1f9cf0"/><path d="M978 1024l-14 13-5.500-4-2.500 1.500 6 5-6 5 2.500 1.500 5.500-4 14 13 3-4.500v-23z" fill="#0a74c7"/><path d="M978 1032l-10 7.500 10 7.500z" fill="#f6e2e2"/>
<!-- notion -->
<path d="M1013 1028l20-3 6.500 4v23l-22 .5-4.500-5z" fill="#fff" stroke="#111" stroke-width="2"/><text x="1020" y="1048" font-family="Liberation Serif,serif" font-size="19" font-weight="700" fill="#111">N</text>
<rect x="1022.500" y="1059.500" width="7" height="3.500" rx="1.700" fill="#777"/>
<!-- visual studio -->
<path d="M1087 1024l9 4v22l-9 4-11-12-6 4-4-2v-14l4-2 6 4z" fill="#b184e8"/><path d="M1087 1032v14l-9-7z" fill="#f5e0e3"/><path d="M1070 1034v10l4-5z" fill="#f5e0e3"/><path d="M1087 1024l-11 12-6-4-4 2 10 5z" fill="#7a55b8"/>
<!-- alien -->
<path d="M1135.500 1024c7 0 11.500 6 11.500 13 0 8-7 17-11.500 17s-11.500-9-11.500-17c0-7 4.500-13 11.500-13z" fill="#2b2b2b"/><path d="M1128 1041l5 4v2zM1143 1041l-5 4v2z" fill="#d8d8d8"/>
<!-- android studio -->
<circle cx="1190.700" cy="1039" r="13.500" fill="#fff"/><path d="M1184 1034a6.700 6.700 0 0 1 13.400 0z" fill="#3ddc84"/><rect x="1184" y="1034" width="13.400" height="13" fill="#2a6fc9"/><text x="1186" y="1046" font-family="Liberation Sans,sans-serif" font-size="11" font-weight="700" fill="#111">AI</text>
<rect x="1187.500" y="1059.500" width="7" height="3.500" rx="1.700" fill="#777"/>
<!-- snipping -->
<rect x="1222" y="1015" width="48" height="48" rx="4" fill="#fff" fill-opacity=".45"/>
<rect x="1232" y="1027" width="14" height="14" rx="1" fill="#eee" stroke="#c42b1c" stroke-width="2.200" stroke-dasharray="3 2"/>
<rect x="1237" y="1032" width="12" height="16" fill="#d0d2d4"/>
<path d="M1249 1036v18M1243 1041h16" stroke="#8a8d90" stroke-width="1.500"/><circle cx="1256" cy="1041" r="2.800" fill="none" stroke="#1b9de2" stroke-width="1.800"/><circle cx="1247" cy="1052" r="2.800" fill="none" stroke="#1b9de2" stroke-width="1.800"/>
<rect x="1236" y="1059.500" width="20" height="3.500" rx="1.700" fill="#0067c0"/>
<!-- tray -->
<path d="M1661 1045l8-8 8 8" fill="none" stroke="#1a1a1a" stroke-width="1.300"/>
<path d="M1694.500 1036a14 14 0 0 1 20 0M1697.500 1039.500a10 10 0 0 1 14 0M1700.500 1043a6 6 0 0 1 8 0" fill="none" stroke="#1a1a1a" stroke-width="1.400"/><circle cx="1704.500" cy="1046" r="1.500" fill="#1a1a1a"/>
<path d="M1724.500 1035h3.500l5-4.500v16l-5-4.500h-3.500z" fill="none" stroke="#1a1a1a" stroke-width="1.200"/><path d="M1736 1034a7 7 0 0 1 0 9M1739 1031a11 11 0 0 1 0 15" fill="none" stroke="#8c8a8c" stroke-width="1.100"/>
<rect x="1754.500" y="1035" width="16" height="10" rx="1.500" fill="none" stroke="#1a1a1a" stroke-width="1.400"/><rect x="1756" y="1036.500" width="10" height="7" fill="#1a1a1a"/><path d="M1771 1038v4" stroke="#1a1a1a" stroke-width="2"/><path d="M1761 1029l-3 6h3l-1 4" fill="none" stroke="#1a1a1a" stroke-width="1.300"/>
<text x="1858.500" y="1034" text-anchor="end" font-family="Liberation Sans,sans-serif" font-size="14" fill="#1a1a1a">21:18</text>
<text x="1858.500" y="1054" text-anchor="end" font-family="Liberation Sans,sans-serif" font-size="14" fill="#1a1a1a">4.02.2023</text>
<circle cx="1883" cy="1039" r="10" fill="#0b62bd"/><text x="1883" y="1044" text-anchor="middle" font-family="Liberation Sans,sans-serif" font-size="13" font-weight="700" fill="#fff">1</text>
</svg>
</body></html>
